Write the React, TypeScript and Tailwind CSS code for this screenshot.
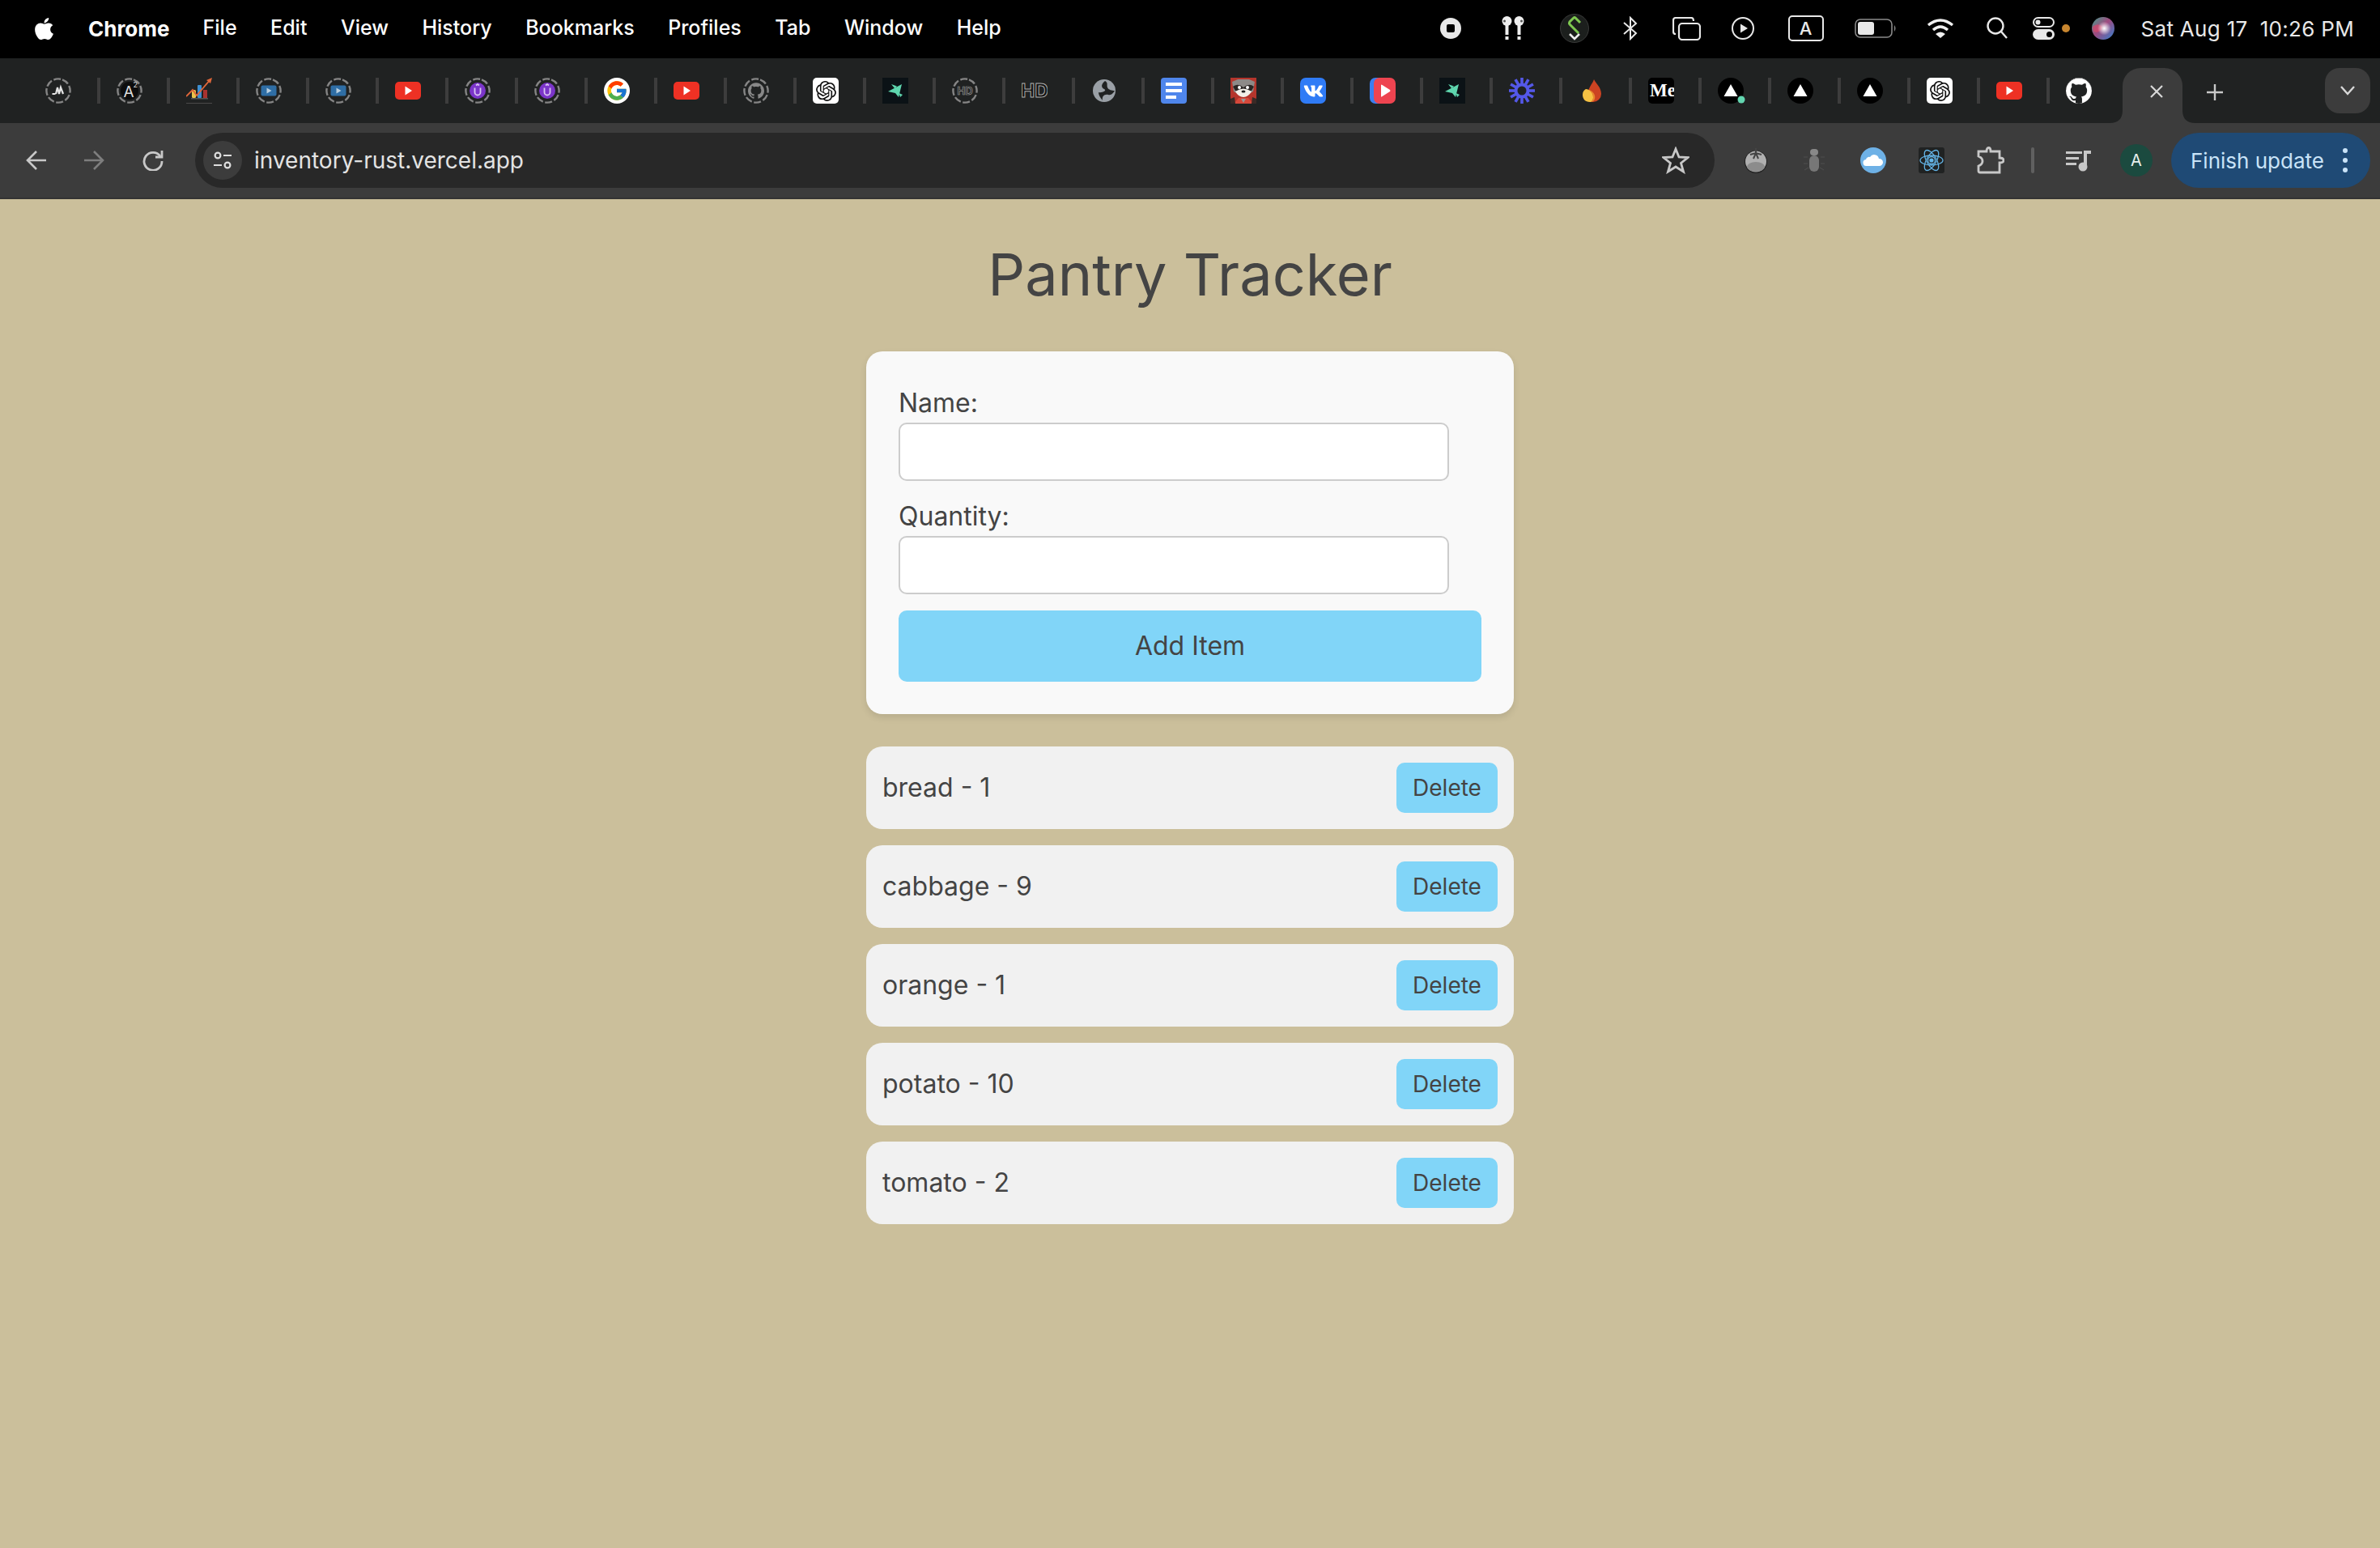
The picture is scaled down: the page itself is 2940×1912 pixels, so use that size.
import React from "react";
import { FaApple, FaVk } from "react-icons/fa";
import { FcGoogle } from "react-icons/fc";
import { SiOpenai, SiGithub } from "react-icons/si";

function Ring({ children }: { children?: React.ReactNode }) {
  return (
    <svg width="32" height="32" viewBox="0 0 32 32">
      <circle cx="16" cy="16" r="14.6" fill="none" stroke="#858585" strokeWidth="2.4" strokeDasharray="8.8 2.67" transform="rotate(-70 16 16)" />
      {children}
    </svg>
  );
}

const Yt = () => (
  <svg width="32" height="32" viewBox="0 0 32 32">
    <rect x="0" y="5" width="32" height="22" rx="5" fill="#ee3124" />
    <path d="M12.5 10.5 L21 16 L12.5 21.5 Z" fill="#fff" />
  </svg>
);
const Ui = () => (
  <Ring>
    <circle cx="16" cy="16" r="10" fill="#7b35c9" />
    <path d="M12.5 12.5 V18 a3.5 3.5 0 0 0 7 0 V12.5 M14 9.5 L16 8 L18 9.5" fill="none" stroke="#d9c6f2" strokeWidth="1.8" />
  </Ring>
);
const Vid = () => (
  <Ring>
    <rect x="6.5" y="9.5" width="19" height="13" rx="2" fill="#2f6ea5" />
    <path d="M13.5 12.5 L19.5 16 L13.5 19.5 Z" fill="#b9cfe0" />
  </Ring>
);
const Plane = () => (
  <svg width="32" height="32" viewBox="0 0 32 32">
    <rect width="32" height="32" fill="#0b1216" />
    <path d="M7 17 L24 8 L20 24 L16 19 Z M11 8 L18 10.500 L15 13 Z M20.500 19 L25 21 L22 24 Z" fill="#5ed6ae" />
  </svg>
);
const Chat = () => (
  <div className="w-[32px] h-[32px] bg-white rounded-[5px] flex items-center justify-center">
    <SiOpenai size={25} color="#111" />
  </div>
);
const Tri = ({ dot }: { dot?: boolean }) => (
  <svg className="overflow-visible" width="32" height="32" viewBox="0 0 32 32">
    <ellipse cx="16" cy="16" rx="16" ry="16" fill="#000" />
    <path d="M16 8 L24.500 23 H7.500 Z" fill="#fff" />
    {dot && <circle cx="29" cy="27" r="4.5" fill="#63d6b0" />}
  </svg>
);

const tabs: React.ReactNode[] = [
  <Ring>
    <path d="M8.500 20 H12.500 M13 20 L15 12 L17 20 L19 12 L22 20" fill="none" stroke="#e4e4e4" strokeWidth="2.2" />
  </Ring>,
  <Ring>
    <circle cx="16" cy="16" r="11" fill="#0d0d0d" />
    <text x="8.500" y="24" fontSize="19" fill="#ddd" fontFamily="Inter, sans-serif">A</text>
    <text x="20.500" y="12" fontSize="9" fill="#ddd" fontFamily="Inter, sans-serif">2</text>
  </Ring>,
  <svg width="32" height="32" viewBox="0 0 32 32">
    <rect x="7" y="15" width="5" height="10" rx="1.5" fill="#e9c44a" />
    <rect x="14" y="9" width="5" height="16" rx="1" fill="#3d8fd1" />
    <rect x="21" y="15" width="5" height="10" fill="#a8322f" />
    <rect x="6" y="25" width="21" height="1.5" fill="#555" />
    <rect x="0" y="31" width="32" height="0.8" fill="#555" />
    <path d="M0 23 L8 15 L13 22 L30 2" fill="none" stroke="#e0673a" strokeWidth="1.8" />
    <path d="M25 3 L32 0 L30 7 Z" fill="#e0673a" />
  </svg>,
  <Vid />,
  <Vid />,
  <Yt />,
  <Ui />,
  <Ui />,
  <div className="w-[32px] h-[32px] bg-white rounded-full flex items-center justify-center">
    <FcGoogle size={28} />
  </div>,
  <Yt />,
  <Ring>
    <foreignObject x="6" y="6" width="20" height="20">
      <SiGithub size={20} color="#888" />
    </foreignObject>
  </Ring>,
  <Chat />,
  <Plane />,
  <Ring>
    <text x="16" y="21" textAnchor="middle" fontSize="13" fill="#202222" stroke="#999999" strokeWidth="0.7" fontWeight="700" fontFamily="Inter, sans-serif">HD</text>
  </Ring>,
  <svg width="32" height="32" viewBox="0 0 32 32">
    <text x="16" y="24" textAnchor="middle" fontSize="23" fill="#111" stroke="#aaaaaa" strokeWidth="1" fontWeight="700" fontFamily="Inter, sans-serif">HD</text>
  </svg>,
  <svg width="32" height="32" viewBox="0 0 32 32">
    <circle cx="16" cy="16" r="14" fill="#9aa0a6" />
    <path d="M17 4 C12 8 12 12 16 14 C20 16 13 19 9 18 C9 21 11 25 14 28 C13 23 16 20 21 21 C25 22 27 19 29 16 C26 16 21 15 20 12 C19 9 21 6 17 4 Z" fill="#202222" />
  </svg>,
  <svg width="32" height="32" viewBox="0 0 32 32">
    <rect width="32" height="32" rx="4" fill="#4f86ec" />
    <rect x="6" y="6" width="20" height="4" fill="#fff" />
    <rect x="6" y="14" width="20" height="4" fill="#fff" />
    <rect x="6" y="22" width="13" height="4" fill="#fff" />
  </svg>,
  <svg width="32" height="32" viewBox="0 0 32 32">
    <rect width="32" height="32" fill="#b5352c" />
    <path d="M2 5 L9 2 H23 L30 5 L28 17 Q16 25 4 17 Z" fill="#8d8a88" />
    <path d="M3 11 Q9 6 16 12 Q23 6 29 11 L26 16 Q20 18 16 15 Q12 18 6 16 Z" fill="#2a2624" />
    <path d="M6 17 Q16 10 26 17 Q22 24 16 24 Q10 24 6 17 Z" fill="#f2efe9" />
    <circle cx="11" cy="12" r="2" fill="#fff" />
    <circle cx="21" cy="12" r="2" fill="#fff" />
    <ellipse cx="16" cy="17" rx="2.5" ry="1.6" fill="#222" />
    <path d="M4 32 L10 25 H22 L28 32 Z" fill="#d6483a" />
    <path d="M0 26 L5 24 L6 32 H0 Z M32 26 L27 24 L26 32 H32 Z" fill="#3a2a26" />
    <path d="M13 26 L16 31 L19 26 Z" fill="#999" />
  </svg>,
  <div className="w-[32px] h-[32px] bg-[#2f7bf6] rounded-[7px] flex items-center justify-center">
    <FaVk size={25} color="#fff" />
  </div>,
  <svg width="32" height="32" viewBox="0 0 32 32">
    <rect width="26" height="32" rx="7" fill="#3b7ef0" />
    <rect x="5" width="27" height="32" rx="7" fill="#ee4450" />
    <path d="M14 9 Q14 8 15.5 9 L25 15 Q26 16 25 17 L15.5 23 Q14 24 14 23 Z" fill="#fff" />
  </svg>,
  <Plane />,
  <svg width="32" height="32" viewBox="0 0 32 32">
    <g stroke="#5458e8" strokeWidth="3.6">
      <line x1="16" y1="0" x2="16" y2="32" />
      <line x1="0" y1="16" x2="32" y2="16" />
      <line x1="8" y1="2.1" x2="24" y2="29.9" />
      <line x1="24" y1="2.1" x2="8" y2="29.9" />
      <line x1="2.1" y1="8" x2="29.9" y2="24" />
      <line x1="2.1" y1="24" x2="29.9" y2="8" />
    </g>
    <circle cx="16" cy="16" r="9.5" fill="#5458e8" />
    <circle cx="16" cy="16" r="5.5" fill="#202222" />
  </svg>,
  <svg width="32" height="32" viewBox="0 0 32 32">
    <path d="M19 2 C22 8 28 12 28 20 A10 10 0 0 1 18 30 C12 30 12 22 12 18 C12 12 17 8 19 2 Z" fill="#cc4322" />
    <path d="M9 14 C13 14 18 18 18 24 C18 28 16 30 14 30 C8 30 5 26 5 21 C5 17 7 15 9 14 Z" fill="#f6c244" />
    <path d="M12 15 C16 17 18 20 18 24 C18 27 17 29 15 30 C19 30 21 26 20 22 C19 18 15 15 12 15 Z" fill="#e88a2e" />
  </svg>,
  <div className="w-[32px] h-[32px] bg-black rounded-[5px] overflow-hidden">
    <div className="w-[50px] text-white font-['Liberation_Serif',serif] font-bold text-[23px] leading-[32px] pl-[2px]">Me</div>
  </div>,
  <Tri dot />,
  <Tri />,
  <Tri />,
  <Chat />,
  <Yt />,
  <div className="w-[32px] h-[32px] bg-white rounded-full flex items-center justify-center overflow-hidden">
    <SiGithub size={32} color="#fff" className="bg-[#202222] rounded-full" />
  </div>,
];

function MenuBar() {
  const items = ["File", "Edit", "View", "History", "Bookmarks", "Profiles", "Tab", "Window", "Help"];
  return (
    <div className="h-[72px] bg-black text-white flex items-center font-['Inter',sans-serif] text-[26px] pl-[39px] pr-[32px] pb-[2px]">
      <FaApple size={31} />
      <span className="ml-[39px] font-bold">Chrome</span>
      <div className="ml-[41px] flex gap-[41.5px] font-medium text-[25px]">
        {items.map((m) => (
          <span key={m}>{m}</span>
        ))}
      </div>
      <div className="ml-auto flex items-center text-[#e8e8e8]">
        <svg width="26" height="26" viewBox="0 0 26 26">
          <circle cx="13" cy="13" r="13" fill="#e8e8e8" />
          <rect x="8" y="8" width="10" height="10" rx="2" fill="#000" />
        </svg>
        <svg className="ml-[50px]" width="28" height="30" viewBox="0 0 28 30">
          <circle cx="6.5" cy="6" r="6" fill="#eee" />
          <circle cx="21.5" cy="6" r="6" fill="#eee" />
          <circle cx="3.5" cy="6" r="1.500" fill="#555" />
          <circle cx="24.5" cy="6" r="1.500" fill="#555" />
          <rect x="4.5" y="11" width="4" height="12" fill="#eee" />
          <rect x="19.5" y="11" width="4" height="12" fill="#eee" />
          <rect x="4.5" y="25" width="4" height="4" fill="#eee" />
          <rect x="19.5" y="25" width="4" height="4" fill="#eee" />
        </svg>
        <svg className="ml-[44px]" width="36" height="36" viewBox="0 0 36 36">
          <circle cx="18" cy="18" r="17.5" fill="#1c1f1d" stroke="#555" strokeWidth="0.6" />
          <path d="M25 11 L19 5 Q18 4 17 5 L12 10 Q11 12 12 13 L23 24" fill="none" stroke="#7ec850" strokeWidth="3" />
          <path d="M12 25 L18 31 L24 25" fill="none" stroke="#eee" strokeWidth="2.6" />
        </svg>
        <svg className="ml-[42px]" width="18" height="30" viewBox="0 0 18 30" fill="none" stroke="#e8e8e8" strokeWidth="2">
          <path d="M1 8 L16 21 L9 28 V2 L16 9 L1 22" />
        </svg>
        <svg className="ml-[43px]" width="35" height="29" viewBox="0 0 35 29" fill="none" stroke="#e8e8e8" strokeWidth="2.2">
          <path d="M4 21 Q1 21 1 18 V4 Q1 1 4 1 H23 Q26 1 26 5" />
          <rect x="8" y="8" width="26" height="20" rx="4" />
        </svg>
        <svg className="ml-[38px]" width="28" height="28" viewBox="0 0 28 28">
          <circle cx="14" cy="14" r="13" fill="none" stroke="#e8e8e8" strokeWidth="2" />
          <path d="M11 8.5 L20 14 L11 19.5 Z" fill="#e8e8e8" />
        </svg>
        <div className="ml-[42px] w-[44px] h-[32px] border-2 border-[#e8e8e8] rounded-[5px] flex items-center justify-center text-[22px] font-medium">A</div>
        <svg className="ml-[38px]" width="52" height="24" viewBox="0 0 52 24">
          <rect x="1" y="1" width="45" height="22" rx="6" fill="none" stroke="#8a8a8a" strokeWidth="1.6" />
          <rect x="4" y="4" width="20" height="16" rx="3" fill="#e8e8e8" />
          <path d="M49 8 Q52 12 49 16 Z" fill="#8a8a8a" />
        </svg>
        <svg className="ml-[37px]" width="34" height="26" viewBox="0 0 34 26" fill="none" stroke="#f0f0f0" strokeWidth="3.4">
          <path d="M2 9 Q17 -3 32 9" />
          <path d="M8 15 Q17 7 26 15" />
          <path d="M17 25 L11 20 Q17 15 23 20 Z" fill="#f0f0f0" stroke="none" />
        </svg>
        <svg className="ml-[40px]" width="26" height="28" viewBox="0 0 26 28" fill="none" stroke="#e8e8e8" strokeWidth="2.4">
          <circle cx="11" cy="11" r="9.5" />
          <path d="M18 18 L25 26" />
        </svg>
        <svg className="ml-[31px]" width="27" height="28" viewBox="0 0 27 28">
          <rect x="1" y="1" width="25" height="11" rx="5.5" fill="none" stroke="#e8e8e8" strokeWidth="2" />
          <circle cx="6.5" cy="6.5" r="3" fill="#e8e8e8" />
          <rect y="15" width="27" height="13" rx="6.5" fill="#e8e8e8" />
          <circle cx="20.5" cy="21.5" r="3.5" fill="#000" />
        </svg>
        <div className="ml-[9px] w-[10px] h-[10px] rounded-full bg-[#c8862f]" />
        <svg className="ml-[27px]" width="28" height="28" viewBox="0 0 28 28">
          <defs>
            <linearGradient id="siriA" x1="0" y1="0" x2="1" y2="1">
              <stop offset="0" stopColor="#3fa08a" />
              <stop offset="0.45" stopColor="#a04a80" />
              <stop offset="1" stopColor="#2f82d0" />
            </linearGradient>
            <radialGradient id="siriB" cx="0.55" cy="0.5" r="0.3">
              <stop offset="0" stopColor="#fff" />
              <stop offset="1" stopColor="#fff" stopOpacity="0" />
            </radialGradient>
          </defs>
          <circle cx="14" cy="14" r="14" fill="url(#siriA)" />
          <path d="M1 12 Q8 6 14 13 Q8 21 2 18 Z" fill="#d0486e" opacity="0.8" />
          <circle cx="14" cy="14" r="14" fill="url(#siriB)" />
        </svg>
        <span className="ml-[33px] text-[26px] whitespace-pre tracking-[0.3px]">{"Sat Aug 17  10:26 PM"}</span>
      </div>
    </div>
  );
}

function TabBar() {
  return (
    <div className="h-[80px] bg-[#202222] flex items-start pl-[56px]">
      {tabs.map((t, i) => (
        <div key={i} className="flex items-center pt-[24px]">
          <div className="w-[32px] h-[32px] flex items-center justify-center">{t}</div>
          {i < tabs.length - 1 && (
            <div className={i === 0 ? "w-[4px] h-[32px] bg-[#3d3d3d] ml-[32px] mr-[20px]" : "w-[4px] h-[32px] bg-[#3d3d3d] ml-[30px] mr-[20px]"} />
          )}
        </div>
      ))}
      <div className="relative mt-[12px] ml-[38px] w-[74px] h-[68px] bg-[#3c3c3c] rounded-t-[22px] flex items-center justify-center pb-[10px] pl-[10px]">
        <svg className="absolute left-[-16px] bottom-0" width="16" height="16" viewBox="0 0 16 16">
          <path d="M16 0 V16 H0 Q16 16 16 0 Z" fill="#3c3c3c" />
        </svg>
        <svg className="absolute right-[-16px] bottom-0" width="16" height="16" viewBox="0 0 16 16">
          <path d="M0 0 V16 H16 Q0 16 0 0 Z" fill="#3c3c3c" />
        </svg>
        <svg width="16" height="16" viewBox="0 0 16 16" stroke="#d8d8d8" strokeWidth="2.2">
          <path d="M1 1 L15 15 M15 1 L1 15" />
        </svg>
      </div>
      <svg className="mt-[32px] ml-[30px]" width="20" height="20" viewBox="0 0 20 20" stroke="#c8c8c8" strokeWidth="2.4">
        <path d="M10 0 V20 M0 10 H20" />
      </svg>
      <div className="mt-[12px] ml-[126px] w-[56px] h-[56px] bg-[#3c3c3c] rounded-[18px] flex items-center justify-center">
        <svg width="18" height="12" viewBox="0 0 18 12" fill="none" stroke="#d8d8d8" strokeWidth="2.4">
          <path d="M1 1 L9 10 L17 1" />
        </svg>
      </div>
    </div>
  );
}

function Toolbar() {
  return (
    <div className="h-[94px] bg-[#3c3c3c] border-b-2 border-[#343434] flex items-center font-['Inter',sans-serif]">
      <svg className="ml-[32px]" width="25" height="26" viewBox="0 0 25 26" fill="none" stroke="#c8c8c8" strokeWidth="2.6">
        <path d="M25 13 H3 M13 2 L2 13 L13 24" />
      </svg>
      <svg className="ml-[47px]" width="25" height="26" viewBox="0 0 25 26" fill="none" stroke="#7e7e7e" strokeWidth="2.6">
        <path d="M0 13 H22 M12 2 L23 13 L12 24" />
      </svg>
      <svg className="ml-[47px]" width="26" height="26" viewBox="0 0 26 26" fill="none" stroke="#c8c8c8" strokeWidth="2.8">
        <path d="M22 8 A11 11 0 1 0 24 14" />
        <path d="M24 1 V9 H16" />
      </svg>
      <div className="ml-[39px] w-[1877px] h-[68px] bg-[#282828] rounded-full flex items-center pl-[10px] pr-[31px]">
        <div className="w-[48px] h-[48px] rounded-full bg-[#3c3c3c] flex items-center justify-center">
          <svg width="24" height="24" viewBox="0 0 24 24" fill="none" stroke="#dedede" strokeWidth="2.2">
            <circle cx="6" cy="6" r="3.4" />
            <path d="M13 6 H23 M1 18 H11" />
            <circle cx="18" cy="18" r="3.4" />
          </svg>
        </div>
        <span className="ml-[15px] text-[28px] text-[#e3e3e3]">inventory-rust.vercel.app</span>
        <svg className="ml-auto" width="34" height="34" viewBox="0 0 34 34" fill="none" stroke="#c8c8c8" strokeWidth="2.8">
          <path d="M17 3 L21 13 L32 13.5 L23.5 20.5 L26.5 31 L17 25 L7.5 31 L10.5 20.5 L2 13.5 L13 13 Z" />
        </svg>
      </div>
      <svg className="ml-[35px]" width="32" height="32" viewBox="0 0 32 32">
        <circle cx="16" cy="18" r="14" fill="#222" />
        <circle cx="16" cy="17.5" r="13" fill="#b0b0b0" />
        <ellipse cx="16" cy="24" rx="11" ry="6" fill="#8c8c8c" />
        <path d="M16 1 V10 M9 9 L16 7 L23 9 M16 7 L13 14 M16 7 L19 14" stroke="#444" strokeWidth="2" fill="none" />
      </svg>
      <svg className="ml-[40px]" width="32" height="32" viewBox="0 0 32 32">
        <rect x="11" y="2" width="10" height="8" rx="4" fill="#888" />
        <rect x="10" y="10" width="12" height="20" rx="6" fill="#777" />
        <path d="M3 12 H8 M3 20 H8 M24 12 H29 M24 20 H29 M4 28 L9 25 M28 28 L23 25" stroke="#4f4f4f" strokeWidth="1" />
      </svg>
      <svg className="ml-[41px]" width="32" height="32" viewBox="0 0 32 32">
        <circle cx="16" cy="16" r="16" fill="#6eb1e6" />
        <path d="M8 23 A4 4 0 0 1 7 15 A4 4 0 0 1 12 12 A6 6 0 0 1 23 14 A4.5 4.5 0 0 1 24 23 Z" fill="#fff" />
      </svg>
      <svg className="ml-[40px]" width="32" height="32" viewBox="0 0 32 32">
        <rect width="32" height="32" rx="3" fill="#202222" />
        <g fill="none" stroke="#64b5e8" strokeWidth="1.3">
          <ellipse cx="16" cy="16" rx="14" ry="6" />
          <ellipse cx="16" cy="16" rx="14" ry="6" transform="rotate(60 16 16)" />
          <ellipse cx="16" cy="16" rx="14" ry="6" transform="rotate(120 16 16)" />
          <circle cx="16" cy="16" r="4.5" />
        </g>
        <circle cx="16" cy="16" r="2.6" fill="#64b5e8" />
      </svg>
      <svg className="ml-[40px]" width="34" height="34" viewBox="0 0 34 34" fill="none" stroke="#c8c8c8" strokeWidth="2.8">
        <path d="M2 6 H12 Q12 1.5 14.500 1.500 Q17 1.500 17 6 H28 V14 Q33 14 33 17 Q33 20 28 20 V32 H4 Q2 32 2 30 V24 Q7 22 7 18 Q7 14 2 12 Z" />
      </svg>
      <div className="ml-[33px] w-[4px] h-[32px] rounded-full bg-[#606060]" />
      <svg className="ml-[39px]" width="32" height="28" viewBox="0 0 32 28">
        <path d="M0 3 H20 V6 H0 Z M0 10 H16 V13 H0 Z M0 17 H13 V20 H0 Z" fill="#c8c8c8" />
        <path d="M22 22 V2 H31 V6 H26 V22" fill="#c8c8c8" />
        <circle cx="21" cy="22" r="5.500" fill="#c8c8c8" />
      </svg>
      <div className="ml-[35px] w-[40px] h-[40px] rounded-full bg-[#1b4a3f] flex items-center justify-center text-[20px] text-[#e8f0ee]">A</div>
      <div className="ml-[23px] w-[246px] h-[68px] rounded-full bg-[#1f4a75] flex items-center pl-[24px] text-[#c9e3f8] text-[26px]">
        Finish update
        <div className="ml-[23px] flex flex-col gap-[6px]">
          <div className="w-[6px] h-[6px] rounded-full bg-[#c9e3f8]" />
          <div className="w-[6px] h-[6px] rounded-full bg-[#c9e3f8]" />
          <div className="w-[6px] h-[6px] rounded-full bg-[#c9e3f8]" />
        </div>
      </div>
    </div>
  );
}

const items = ["bread - 1", "cabbage - 9", "orange - 1", "potato - 10", "tomato - 2"];

function Pantry() {
  return (
    <div className="flex-1 bg-[#cbbf9b] font-['Inter',sans-serif] text-[#444444]">
      <div className="w-[800px] mx-auto">
        <h1 className="h-[188px] flex items-center justify-center text-[72px] pb-[2px] font-normal">Pantry Tracker</h1>
        <div className="bg-[#f9f9f9] rounded-[20px] shadow-[0_4px_8px_rgba(0,0,0,0.1)] p-[40px] flex flex-col">
          <label className="h-[48px] text-[32px] leading-[48px]">Name:</label>
          <input className="w-[680px] h-[72px] bg-white border-2 border-[#cccccc] rounded-[10px]" />
          <label className="mt-[20px] h-[48px] text-[32px] leading-[48px]">Quantity:</label>
          <input className="w-[680px] h-[72px] bg-white border-2 border-[#cccccc] rounded-[10px]" />
          <button className="mt-[20px] h-[88px] bg-[#81d5f8] rounded-[10px] text-[32px] text-[#444444]">Add Item</button>
        </div>
        <ul className="mt-[40px] flex flex-col gap-[20px]">
          {items.map((it) => (
            <li key={it} className="h-[102px] bg-[#f1f1f1] rounded-[20px] flex items-center justify-between pl-[20px] pr-[20px] text-[32px]">
              <span>{it}</span>
              <button className="w-[125px] h-[62px] bg-[#81d5f8] rounded-[10px] text-[28px] text-[#444444]">Delete</button>
            </li>
          ))}
        </ul>
      </div>
    </div>
  );
}

export default function App() {
  return (
    <div className="w-[2940px] h-[1912px] flex flex-col overflow-hidden">
      <MenuBar />
      <TabBar />
      <Toolbar />
      <Pantry />
    </div>
  );
}
